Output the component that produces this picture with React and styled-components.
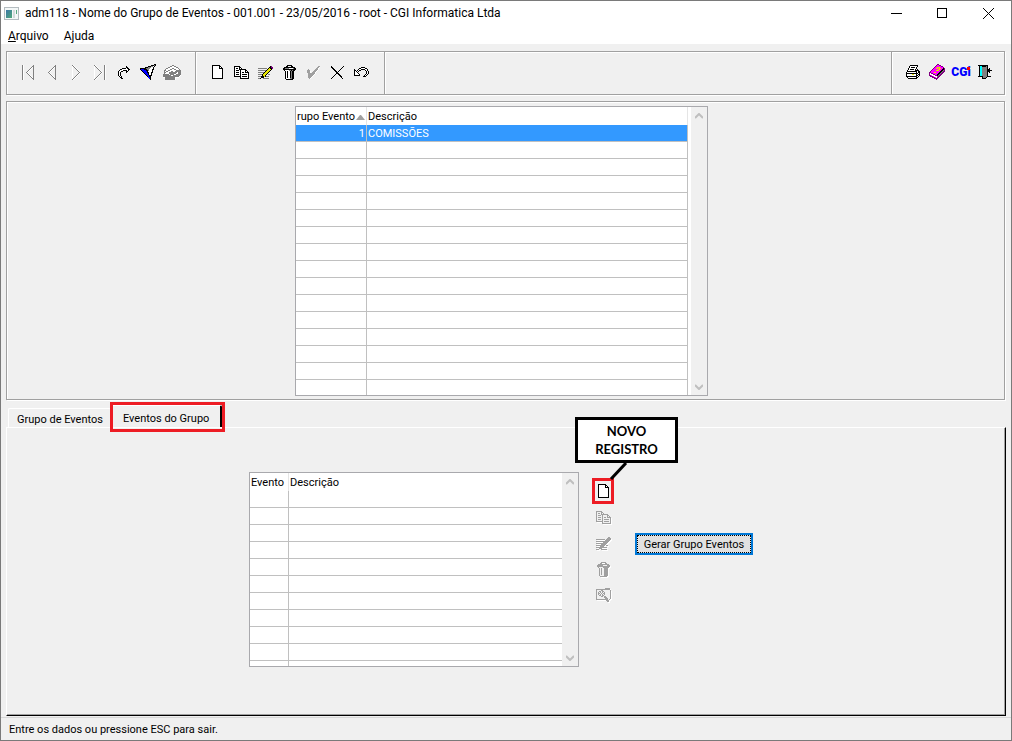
import { useState } from "react";
import styled, { createGlobalStyle } from "styled-components";

const colors = {
    face: "#f0f0f0",
    white: "#ffffff",
    black: "#000000",
    shadow: "#a0a0a0",
    line: "#c0c0c0",
    select: "#3399ff",
    focus: "#0078d7",
    mark: "#ed1c24",
};

const fonts = {
    system: 'Roboto, "Noto Sans", sans-serif',
    form: 'Roboto, "Liberation Sans", sans-serif',
    note: 'Lato, "Open Sans", sans-serif',
};

// one letter for each colour of a pixel icon
const palette = {
    "#": "#000000",
    w: "#ffffff",
    d: "#808080",
    y: "#e6e600",
    p: "#800080",
    m: "#ff00ff",
    b: "#0000ff",
    c: "#00ffff",
};

const page = [
    "########...",
    "#wwwwww##..",
    "#wwwwww#w#.",
    "#wwwwww####",
    "#wwwwwwwww#",
    "#wwwwwwwww#",
    "#wwwwwwwww#",
    "#wwwwwwwww#",
    "#wwwwwwwww#",
    "#wwwwwwwww#",
    "#wwwwwwwww#",
    "#wwwwwwwww#",
    "#wwwwwwwww#",
    "###########",
];

const copy = [
    "######.........",
    "#wwww##........",
    "#w##w#w#.......",
    "#wwww#######...",
    "#w###w#wwww##..",
    "#wwwww#wwww#w#.",
    "#w###w#w##w####",
    "#wwwww#wwwwwww#",
    "#w###w#w#####w#",
    "#wwwww#wwwwwww#",
    "#######w#####w#",
    "......#wwwwwww#",
    "......#########",
];

const edit = [
    "............#p.",
    "...........##pp",
    "ddddddddd.#y##p",
    ".........#yyy#.",
    "dddddddd#yyy#..",
    ".......#yyy#...",
    "dddddd#yyy#....",
    ".....#yyy#.....",
    "dddd#yyy#.dd...",
    "....#yy#.......",
    "ddd###y#ddd....",
    "...###.........",
    "dd#..dddddd....",
];

const trash = [
    "....#####....",
    "...##...##...",
    ".###########.",
    "##ddddwwwwd##",
    "#############",
    ".#wwwwdd#d##.",
    "..#w#ww#d##..",
    "..#w#ww#d##..",
    "..#w#ww#d##..",
    "..#w#ww#d##..",
    "..#w#ww#d##..",
    "..#w#ww#d##..",
    "..#w#ww#d##..",
    "..#wwwwdd##..",
    "...#######...",
];

const check = [
    "............dd",
    "...........ddw",
    "..........ddw.",
    "..d......dddw.",
    ".ddd....dddw..",
    ".dddw..dddw...",
    ".dddw.dddw....",
    "..dddddddw....",
    "..ddddddw.....",
    "..dddddw......",
    "..ddddw.......",
    "..dddw........",
    "...dw.........",
];

const cancel = [
    "#...........#",
    "##.........#.",
    ".##.......#..",
    "..##.....#...",
    "...##...#....",
    "....##.#.....",
    ".....##......",
    ".....###.....",
    "....#..##....",
    "...#....##...",
    "..#......##..",
    ".#........#..",
    "#..........#.",
];

const undo = [
    ".......####....",
    ".....##wwww##..",
    "#...#ww####ww#.",
    "##.#w##....#w#.",
    "#w#w#.......#w#",
    "#ww#........#w#",
    "#www#.......#w#",
    "#wwww#.....#w#.",
    "######....#w#..",
    ".........###...",
];

const redo = [
    "........#....",
    "........##...",
    "....####w##..",
    "..##wwwwww##.",
    ".#www####w#..",
    "#ww##...##...",
    "#w#.....#....",
    "#w#..........",
    "#w#..........",
    "#w#..........",
    ".#w#.........",
    "..##.........",
    "...##........",
];

const filter = [
    "..............##",
    "...........###d#",
    "........###ddw#.",
    ".....###dddww#..",
    "######ddddwww#..",
    "#bbb###ddwww##..",
    ".#bbbb##dwww#...",
    "..#bbbb#wwww#...",
    "...#bbb##ww##...",
    "....#bbb#ww#....",
    ".....#bb#ww#....",
    "......#bb###....",
    ".......#b##.....",
    "........bb#.....",
    ".........b#.....",
    "..........#.....",
];

const drawer = [
    ".........dd.......",
    ".......ddwwdd.....",
    ".....ddwwwwwwdd...",
    "...ddwwwwddwwwwd..",
    "..dwwwwddwwddwwwd.",
    ".ddwwddwwwwwwddddd",
    ".dwddwwwddwwdddddd",
    ".ddwwwddddddddwddd",
    ".dwwwwdddddddwwddd",
    "ddddddwddddwwddddd",
    "ddddddddwwdddddddw",
    "ddddddddddddddddw.",
    "wwddddddddddwwww..",
    "..ddddddddddw.....",
    "..ddddddddddw.....",
];

const printer = [
    "....########..",
    "...#wwwwwww#..",
    "...#w####w#...",
    "..#wwwwwww#...",
    "..#w####w#.#..",
    ".#wwwwwww####.",
    ".##########w##",
    "#wwwwwwwww#w##",
    "############w#",
    "#wwwwwyyww#w##",
    "#wwwwwwwww##w#",
    "###########w#.",
    ".#wwwwwwww##..",
    "..#########...",
];

const book = [
    "........pp......",
    ".......pmmpp....",
    "......pmmmmmpp..",
    ".....pmmyyymmmp.",
    "....pmmyymyymm#p",
    "...pmmmmmyymm##p",
    "..pmmmmyyymm##dp",
    ".pmmmmmmmmm##dpp",
    "ppmmmyymmm##dpp.",
    "pwppmmmmm##dpp..",
    "pwwwppmm##dpp...",
    "ppmwwwpp#dpp....",
    ".pppmwwwdpp.....",
    "...pppmwpp......",
    ".....pppp.......",
    ".......p........",
];

const door = [
    "##########....",
    ".#cc####d#....",
    ".#ccddddd#....",
    ".#ccddddd#.#..",
    ".#ccddddd###..",
    ".#ccddddd#####",
    ".#ccddddd###..",
    ".#ccddddd#.#..",
    ".#ccddddd#....",
    ".#ccddddd#....",
    ".#ccddddd#....",
    "#####dddd####.",
    "....#ddd#.....",
    "....####......",
];

const search = [
    ".........#####.",
    "##############.",
    "#wwww##wwwwwww#",
    "#ww##w##wwwwww#",
    "#w#w#w#w#wwwww#",
    "#w##w#w##wwwww#",
    "#w#w#w#w#wwwww#",
    "#ww##w##wwwwww#",
    "#wwww##w##wwww#",
    "#wwwwwww###www#",
    "#wwwwwwww###ww#",
    "############w#.",
    "..........###..",
    "...........##..",
];

const first = [
    "dw.........d",
    "dw........dd",
    "dw.......dwd",
    "dw......dw.d",
    "dw.....dw..d",
    "dw....dw...d",
    "dw...dw....d",
    "dw..dw.....d",
    "dw...dw....d",
    "dw....dw...d",
    "dw.....dw..d",
    "dw......dw.d",
    "dw.......dwd",
    "dw........dd",
    "dw.........d",
];

const prev = first.map((row) => row.slice(4));

const next = [
    "dw......",
    "wdw.....",
    "w.dw....",
    "w..dw...",
    "w...dw..",
    "w....dw.",
    "w.....dw",
    "w......d",
    "w.....dw",
    "w....dw.",
    "w...dw..",
    "w..dw...",
    "w.dw....",
    "wdw.....",
    "dw......",
];

const last = next.map((row, y) => row + (y === 7 ? "w.dw" : "..dw"));

const navTools = [
    { label: "Primeiro", rows: first },
    { label: "Anterior", rows: prev },
    { label: "Próximo", rows: next },
    { label: "Último", rows: last },
    { label: "Ir para", rows: redo },
    { label: "Filtro", rows: filter },
    { label: "Arquivar", rows: drawer },
];

const editTools = [
    { label: "Novo", rows: page },
    { label: "Copiar", rows: copy },
    { label: "Alterar", rows: edit },
    { label: "Excluir", rows: trash },
    { label: "Confirmar", rows: check, faded: true },
    { label: "Cancelar", rows: cancel },
    { label: "Desfazer", rows: undo },
];

const sideTools = [
    { label: "Copiar evento", rows: copy },
    { label: "Alterar evento", rows: edit },
    { label: "Excluir evento", rows: trash },
    { label: "Consultar evento", rows: search },
];

const groups = [{ id: 1, name: "COMISSÕES" }];

const App = () => {
    const [tab, setTab] = useState(1);

    return (
        <Window>
            <GlobalStyle />
            <TitleBar>
                <AppIcon />
                <Title>adm118 - Nome do Grupo de Eventos - 001.001 - 23/05/2016 - root - CGI Informatica Ltda</Title>
                <WindowButtons />
            </TitleBar>
            <MenuBar>
                <MenuItem><u>A</u>rquivo</MenuItem>
                <MenuItem>Ajuda</MenuItem>
            </MenuBar>
            <ToolBar>
                <ToolGroup>
                    {navTools.map((tool) => <Tool key={tool.label} tool={tool} />)}
                </ToolGroup>
                <ToolGroup>
                    {editTools.map((tool) => <Tool key={tool.label} tool={tool} />)}
                </ToolGroup>
                <ToolSpace />
                <ToolGroup $last>
                    <Tool tool={{ label: "Imprimir", rows: printer }} />
                    <Tool tool={{ label: "Manual", rows: book }} />
                    <ToolButton><Logo>CG<LogoI>i</LogoI></Logo></ToolButton>
                    <Tool tool={{ label: "Sair", rows: door }} />
                </ToolGroup>
            </ToolBar>
            <TopPanel>
                <GroupGrid />
            </TopPanel>
            <Tabs role="tablist">
                <Tab role="tab" aria-selected={tab === 0} $active={tab === 0} onClick={() => setTab(0)}>Grupo de Eventos</Tab>
                <Tab role="tab" aria-selected={tab === 1} $active={tab === 1} onClick={() => setTab(1)}>
                    Eventos do Grupo
                    <TabMark />
                </Tab>
            </Tabs>
            <TabPanel role="tabpanel">
                <EventGrid />
                <SideTools>
                    <NewEvent>
                        <SideButton aria-label="Novo evento"><PixelIcon rows={page} /></SideButton>
                        <RedBox />
                        <Pointer viewBox="0 0 20 20">
                            <path d="M17 1L2 17" stroke="#000" strokeWidth="3" />
                        </Pointer>
                        <Note>NOVO<br />REGISTRO</Note>
                    </NewEvent>
                    {sideTools.map((tool) => (
                        <SideButton key={tool.label} aria-label={tool.label} disabled>
                            <PixelIcon rows={tool.rows} disabled />
                        </SideButton>
                    ))}
                </SideTools>
                <Generate>Gerar Grupo Eventos</Generate>
            </TabPanel>
            <Status>Entre os dados ou pressione ESC para sair.</Status>
        </Window>
    );
};

const PixelIcon = ({ rows, disabled, faded }) => {
    const width = rows[0].length;
    const color = (c) => {
        if (disabled) return c === "w" ? colors.face : colors.shadow;
        if (faded && c === "d") return colors.shadow;
        return palette[c];
    };
    return (
        <svg width={width} height={rows.length} viewBox={`0 0 ${width} ${rows.length}`} shapeRendering="crispEdges" aria-hidden="true">
            {rows.map((row, y) => [...row].map((c, x) => (
                c === "." ? null : <rect key={`${x}-${y}`} x={x} y={y} width="1" height="1" fill={color(c)} />
            )))}
        </svg>
    );
};

const Tool = ({ tool }) => {
    return (
        <ToolButton aria-label={tool.label}>
            <PixelIcon rows={tool.rows} faded={tool.faded} />
        </ToolButton>
    );
};

const AppIcon = () => {
    return (
        <svg width="15" height="13" viewBox="0 0 15 13" shapeRendering="crispEdges" aria-hidden="true">
            <defs>
                <linearGradient id="screen" x1="0" y1="0" x2="1" y2="1">
                    <stop offset="0" stopColor="#3c78a8" />
                    <stop offset="1" stopColor="#4fa878" />
                </linearGradient>
            </defs>
            <path d="M0 0H15V13H0Z" fill="#b4bcc0" />
            <path d="M1 1H14V12H1Z" fill="#f4f8f8" />
            <path d="M2 3H8V11H2Z" fill="url(#screen)" />
            <path d="M9 3H11V11H9Z" fill="#d4dcdc" />
            <path d="M12 3H13V7H12Z" fill="#58a880" />
        </svg>
    );
};

const WindowButtons = () => {
    return (
        <WindowControls>
            <WindowButton aria-label="Minimizar">
                <svg width="11" height="11" shapeRendering="crispEdges"><path d="M0 5H11V6H0Z" /></svg>
            </WindowButton>
            <WindowButton aria-label="Maximizar">
                <svg width="11" height="11" shapeRendering="crispEdges"><path d="M0 0H10V10H0ZM1 1V9H9V1Z" fillRule="evenodd" /></svg>
            </WindowButton>
            <WindowButton aria-label="Fechar">
                <svg width="11" height="11"><path d="M0 0L11 11M11 0L0 11" stroke="#000" /></svg>
            </WindowButton>
        </WindowControls>
    );
};

const ScrollBar = () => {
    return (
        <Scroll>
            <svg width="8" height="6"><path d="M0 5L4 1L8 5" stroke="#bfbfbf" strokeWidth="2" fill="none" /></svg>
            <svg width="8" height="6"><path d="M0 1L4 5L8 1" stroke="#bfbfbf" strokeWidth="2" fill="none" /></svg>
        </Scroll>
    );
};

const EmptyRows = ({ count }) => {
    return Array.from({ length: count }, (_, i) => (
        <Row key={i}><Cell /><Cell /></Row>
    ));
};

const GroupGrid = () => {
    return (
        <GridBox $width={413}>
            <Table $end $rest={15}>
                <colgroup><col width="71" /><col /></colgroup>
                <thead>
                    <tr>
                        <HeadCell>
                            <Sorted>
                                rupo Evento
                                <svg width="9" height="5"><path d="M0 5L4 0H5L9 5Z" fill="#a0a0a0" /></svg>
                            </Sorted>
                        </HeadCell>
                        <HeadCell>Descrição</HeadCell>
                    </tr>
                </thead>
                <tbody>
                    {groups.map((group) => (
                        <Row key={group.id} $selected>
                            <Cell $right>{group.id}</Cell>
                            <Cell>{group.name}</Cell>
                        </Row>
                    ))}
                    <EmptyRows count={15} />
                </tbody>
            </Table>
            <ScrollBar />
        </GridBox>
    );
};

const EventGrid = () => {
    return (
        <GridBox $width={330}>
            <Table $rest={5}>
                <colgroup><col width="39" /><col /></colgroup>
                <thead>
                    <tr>
                        <HeadCell>Evento</HeadCell>
                        <HeadCell>Descrição</HeadCell>
                    </tr>
                </thead>
                <tbody>
                    <EmptyRows count={11} />
                </tbody>
            </Table>
            <ScrollBar />
        </GridBox>
    );
};

const GlobalStyle = createGlobalStyle`
    * {
        box-sizing: border-box;
    }
    body {
        margin: 0;
        background: ${colors.face};
        color: ${colors.black};
        font-family: ${fonts.form};
        font-size: 11px;
    }
    button {
        margin: 0;
        padding: 0;
        border: 0;
        background: none;
        color: inherit;
        font: inherit;
    }
    svg {
        display: block;
        flex: none;
    }
`;

const Window = styled.div`
    display: flex;
    flex-direction: column;
    min-height: 100vh;
    border: 1px solid #7a7a7a;
    background: ${colors.face};
`;
const TitleBar = styled.header`
    display: flex;
    align-items: center;
    height: 25px;
    padding-left: 3px;
    gap: 6px;
    background: ${colors.white};
    font-family: ${fonts.system};
    font-size: 12px;
`;
const Title = styled.div`
    flex: 1;
    padding-bottom: 2px;
    white-space: nowrap;
`;
const WindowControls = styled.div`
    display: flex;
`;
const WindowButton = styled.button`
    display: flex;
    align-items: center;
    justify-content: center;
    width: 46px;
    height: 24px;
`;
const MenuBar = styled.nav`
    display: flex;
    gap: 15px;
    height: 18px;
    padding: 1px 7px 0;
    background: ${colors.white};
    font-family: ${fonts.system};
    font-size: 12px;
    line-height: 18px;
`;
const MenuItem = styled.button``;

const ToolBar = styled.div`
    display: flex;
    height: 44px;
    margin: 7px 6px 6px 5px;
    border: 1px solid ${colors.shadow};
    box-shadow: 1px 1px 0 ${colors.white}, inset 1px 1px 0 ${colors.white};
`;
const ToolGroup = styled.div`
    display: flex;
    align-items: center;
    padding: 0 ${props => props.$last ? "7px" : "11px"} 2px 9px;
    border-right: ${props => props.$last ? "0" : `1px solid ${colors.shadow}`};
    box-shadow: ${props => props.$last ? "none" : `1px 0 0 ${colors.white}`};
`;
const ToolSpace = styled.div`
    flex: 1;
    border-right: 1px solid ${colors.shadow};
    box-shadow: 1px 0 0 ${colors.white};
`;
const ToolButton = styled.button`
    display: flex;
    align-items: center;
    justify-content: center;
    width: 24px;
    height: 24px;
`;
const Logo = styled.span`
    color: #0000ff;
    font-size: 12px;
    font-weight: 900;
`;
// the dot of the logo's last letter has its own colour
const LogoI = styled.span`
    position: relative;

    &::before {
        content: "";
        position: absolute;
        top: 2px;
        left: 0;
        width: 3px;
        height: 3px;
        background: #ff0000;
    }
`;

const TopPanel = styled.section`
    display: flex;
    justify-content: center;
    margin: 0 6px 0 5px;
    padding: 4px 8px 3px 0;
    border: 1px solid ${colors.shadow};
    box-shadow: 1px 1px 0 ${colors.white}, inset 1px 1px 0 ${colors.white};
`;
const GridBox = styled.div`
    display: flex;
    justify-content: space-between;
    width: ${props => props.$width}px;
    border: 1px solid #a9a9ad;
    background: ${colors.white};
`;
const Cell = styled.td`
    height: 17px;
    padding: 2px 1px 0;
    border-right: 1px solid ${colors.line};
    border-bottom: 1px solid ${colors.line};
    line-height: 14px;
    text-align: ${props => props.$right ? "right" : "left"};
`;
const Row = styled.tr`
    background: ${props => props.$selected ? colors.select : colors.white};
    color: ${props => props.$selected ? colors.white : colors.black};
`;
const HeadCell = styled.th`
    height: 18px;
    padding: 2px 1px 0;
    overflow: hidden;
    border-right: 1px solid #e5e5e5;
    font-weight: normal;
    line-height: 16px;
    text-align: left;
    white-space: nowrap;
`;
const Table = styled.table`
    width: ${props => props.$end ? 392 : 312}px;
    border-collapse: separate;
    border-spacing: 0;
    table-layout: fixed;

    ${Row}:last-child ${Cell} {
        height: ${props => props.$rest}px;
        border-bottom: 0;
    }
    ${Cell}:last-child, ${HeadCell}:last-child {
        border-right-width: ${props => props.$end ? 1 : 0}px;
    }
`;
const Sorted = styled.div`
    display: flex;
    align-items: center;
    justify-content: flex-end;
    gap: 1px;
`;
const Scroll = styled.div`
    display: flex;
    flex-direction: column;
    align-items: center;
    justify-content: space-between;
    width: 16px;
    padding: 6px 0 5px;
    background: ${colors.face};
`;

const Tabs = styled.div`
    display: flex;
    align-items: flex-end;
    height: 27px;
    margin: 0 7px;
`;
const Tab = styled.button`
    position: relative;
    height: ${props => props.$active ? 22 : 19}px;
    padding: ${props => props.$active ? "3px 11px 0" : "2px 8px 0"};
    border: 1px solid ${colors.white};
    border-right: ${props => props.$active ? "2px solid #000" : "0"};
    border-bottom: 0;
    border-radius: 2px 2px 0 0;
`;
const TabMark = styled.span`
    position: absolute;
    inset: -4px -5px -5px -2px;
    border: 3px solid ${colors.mark};
`;
const TabPanel = styled.section`
    display: flex;
    flex: 1;
    align-items: flex-start;
    justify-content: center;
    margin: 0 5px 1px 5px;
    padding: 44px 10px 47px 0;
    border: 1px solid ${colors.white};
    border-right-color: #000;
    border-bottom-color: #000;
    box-shadow: inset -1px -1px 0 ${colors.shadow};
`;
const SideTools = styled.div`
    display: flex;
    flex-direction: column;
    margin: 6px 21px 0 13px;
`;
const SideButton = styled.button`
    display: flex;
    align-items: center;
    justify-content: center;
    width: 22px;
    height: 26px;

    &:disabled svg {
        filter: drop-shadow(1px 1px 0 ${colors.white});
    }
`;
const NewEvent = styled.div`
    position: relative;
`;
const RedBox = styled.div`
    position: absolute;
    inset: 0;
    border: 3px solid ${colors.mark};
    pointer-events: none;
`;
const Pointer = styled.svg`
    position: absolute;
    left: 17px;
    top: -16px;
    width: 20px;
    height: 20px;
`;
const Note = styled.div`
    position: absolute;
    left: -17px;
    bottom: 41px;
    width: 103px;
    padding: 2px 0;
    border: 3px solid #000;
    background: ${colors.white};
    font-family: ${fonts.note};
    font-size: 13px;
    font-weight: bold;
    line-height: 18px;
    text-align: center;
`;
const Generate = styled.button`
    width: 118px;
    height: 22px;
    margin-top: 61px;
    border: 2px solid ${colors.focus};
    outline: 1px dotted #000;
    outline-offset: -3px;
    background: #e1e1e1;
    white-space: nowrap;
`;
const Status = styled.footer`
    height: 23px;
    padding: 0 8px;
    border-top: 1px solid #d7d7d7;
    line-height: 23px;
`;

export default App;
